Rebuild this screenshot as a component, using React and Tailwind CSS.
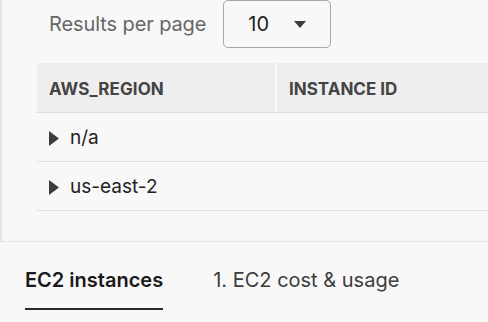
import React from 'react';

const Caret = () => (
  <svg width="12" height="7" viewBox="0 0 12 7" className="fill-[#3c3c3c]">
    <path d="M0 0h12L6 7z" />
  </svg>
);

const Expand = () => (
  <svg width="10" height="15" viewBox="0 0 10 15" className="fill-[#3c3c3c] shrink-0">
    <path d="M0 0l10 7.5L0 15z" />
  </svg>
);

const rows = ['n/a', 'us-east-2'];

const App = () => {
  return (
    <div className="w-[488px] h-[322px] overflow-hidden bg-[#f8f8f8] font-['Inter',sans-serif]">
      {/* Panel */}
      <div className="h-[242px] border-l-2 border-b border-[#e4e4e4]">
        <div className="flex items-center h-[48px]">
          <span className="ml-[47px] text-[20px] text-[#666666] tracking-[-0.1px]">Results per page</span>
          <button className="ml-[17px] w-[108px] h-[48px] flex items-center border border-[#a8a8a8] rounded-[5px] bg-[#f8f8f8]">
            <span className="ml-[24px] text-[20px] text-[#222]">10</span>
            <span className="ml-[25px] mt-[1px]"><Caret /></span>
          </button>
        </div>

        <div className="ml-[35px] mt-[15px]">
          <div className="flex h-[50px] bg-[#eeeeee] border-b border-[#dddddd]">
            <div className="w-[240px] flex items-center pl-[12px] pt-[4px] border-r-2 border-[#fafafa] text-[17px] font-bold text-[#444444] tracking-[0.1px]">
              AWS_REGION
            </div>
            <div className="flex-1 flex items-center pl-[12px] pt-[4px] text-[17px] font-bold text-[#444444]">
              INSTANCE ID
            </div>
          </div>
          {rows.map((r) => (
            <div key={r} className="flex items-center h-[49px] border-b border-[#e0e0e0] pl-[12px] pt-[3px]">
              <Expand />
              <span className="ml-[11px] text-[19px] text-[#222222]">{r}</span>
            </div>
          ))}
        </div>
      </div>

      {/* Tabs */}
      <div className="flex pl-[25px] mt-[26px]">
        <div className="flex flex-col">
          <span className="text-[20px] font-semibold text-[#1a1a1a] leading-[24px]">EC2 instances</span>
          <div className="mt-[16px] h-[2px] bg-[#2a2a2a]" />
        </div>
        <span className="ml-[50px] text-[20px] text-[#3c3c3c] leading-[24px]">1. EC2 cost &amp; usage</span>
      </div>
    </div>
  );
};

export default App;
